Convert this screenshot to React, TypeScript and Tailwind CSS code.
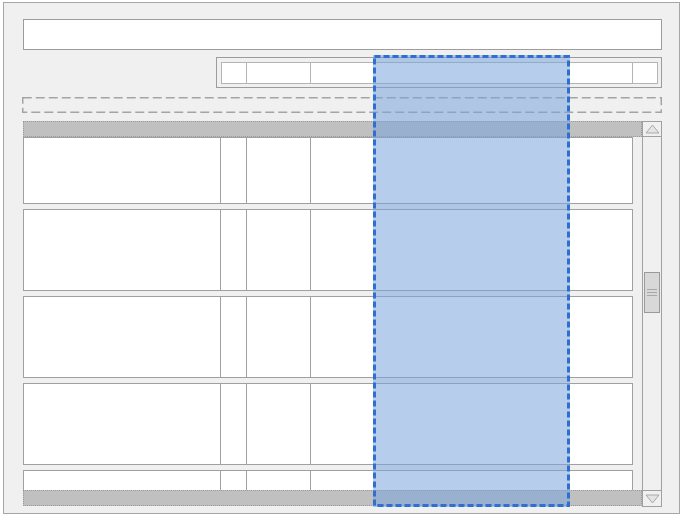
const ROW_HEIGHTS = [67, 82, 82, 82, 82];

function DashedOutline({ color, width, dash }: { color: string; width: number; dash: string }) {
  return (
    <svg className="pointer-events-none absolute inset-0 h-full w-full" preserveAspectRatio="none">
      <rect
        x={width / 2}
        y={width / 2}
        width={`calc(100% - ${width}px)`}
        height={`calc(100% - ${width}px)`}
        fill="none"
        stroke={color}
        strokeWidth={width}
        strokeDasharray={dash}
      />
    </svg>
  );
}

function Triangle({ down }: { down?: boolean }) {
  return (
    <svg width="15" height="10" viewBox="0 0 15 10">
      <polygon
        points={down ? "1,1 14,1 7.5,9" : "1,9 14,9 7.5,1"}
        fill="#e4e4e4"
        stroke="#a8a8a8"
        strokeWidth="1"
      />
    </svg>
  );
}

function Row({ height }: { height: number }) {
  return (
    <div
      className="flex w-[610px] shrink-0 border border-[#a0a0a0] bg-white"
      style={{ height }}
    >
      <div className="w-[196px]" />
      <div className="w-[26px] border-l border-[#a0a0a0]" />
      <div className="w-[64px] border-l border-[#a0a0a0]" />
      <div className="flex-1 border-l border-[#a0a0a0]" />
    </div>
  );
}

function Scrollbar() {
  return (
    <div className="flex h-[386px] w-[20px] flex-col border border-[#a0a0a0] bg-[#f0f0f0]">
      <div className="flex h-[15px] items-center justify-center border-b border-[#a0a0a0]">
        <Triangle />
      </div>
      <div className="flex-1">
        <div className="mx-px mt-[135px] flex h-[41px] flex-col items-center justify-center gap-[2px] border border-[#9a9a9a] bg-[#d8d8d8]">
          <div className="h-px w-[10px] bg-[#a8a8a8]" />
          <div className="h-px w-[10px] bg-[#a8a8a8]" />
          <div className="h-px w-[10px] bg-[#a8a8a8]" />
        </div>
      </div>
      <div className="flex h-[16px] items-center justify-center border-t border-[#a0a0a0]">
        <Triangle down />
      </div>
    </div>
  );
}

export default function App() {
  return (
    <div className="relative h-[515px] w-[684px] bg-white pl-[3px] pt-[2px]">
      <div className="flex h-[512px] w-[677px] flex-col border border-[#a6a6a6] bg-[#f0f0f0] pl-[19px] pr-[17px] pt-[16px]">
        {/* title input */}
        <div className="h-[31px] w-full border border-[#9c9c9c] bg-white" />

        {/* toolbar */}
        <div className="mt-[7px] h-[31px] w-[446px] self-end border border-[#9c9c9c] pb-[3px] pl-[4px] pr-[3px] pt-[4px]">
          <div className="flex h-full w-full border border-[#b4b4b4] bg-white">
            <div className="w-[24px]" />
            <div className="w-[64px] border-l border-[#b4b4b4]" />
            <div className="flex-1 border-l border-[#b4b4b4]" />
            <div className="w-[25px] border-l border-[#b4b4b4]" />
          </div>
        </div>

        {/* dashed drop zone */}
        <div className="relative -ml-px mt-[9px] h-[16px] w-[640px]">
          <DashedOutline color="#a4a4a4" width={1.5} dash="9 4" />
        </div>

        {/* table */}
        <div className="mt-[8px] flex">
          <div className="flex w-[619px] flex-col">
            <div className="h-[16px] border border-dotted border-[#9a9a9a] bg-[#c0c0c0]" />
            <div className="flex h-[353px] flex-col gap-[5px] overflow-hidden">
              {ROW_HEIGHTS.map((h, i) => (
                <Row key={i} height={h} />
              ))}
            </div>
            <div className="h-[16px] border border-dotted border-[#9a9a9a] bg-[#c0c0c0]" />
          </div>
          <Scrollbar />
        </div>
      </div>

      {/* selected column */}
      <div className="absolute left-[373px] top-[55px] h-[452px] w-[197px] bg-[rgba(122,162,220,0.54)]">
        <DashedOutline color="#2f6fcf" width={3} dash="6 3" />
      </div>
    </div>
  );
}
